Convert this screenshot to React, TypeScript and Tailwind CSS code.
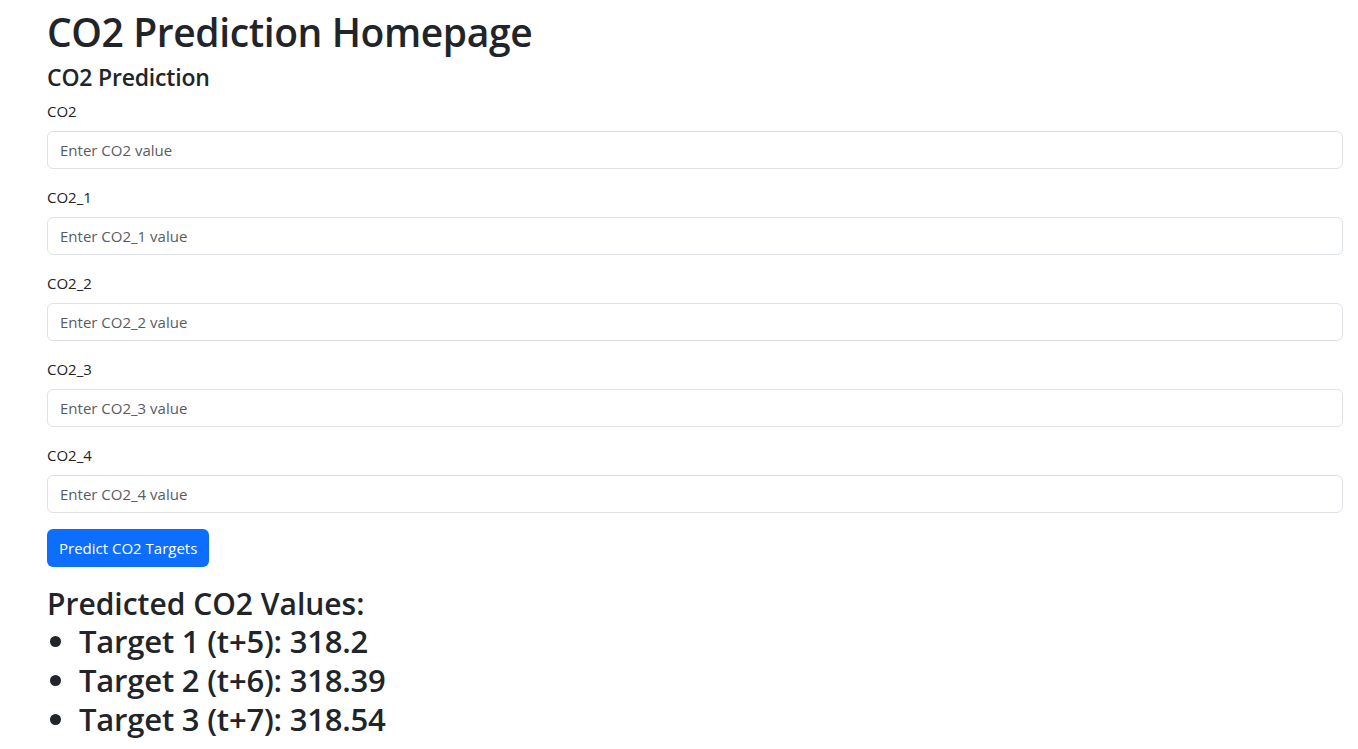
import React from "react";

const fields = ["CO2", "CO2_1", "CO2_2", "CO2_3", "CO2_4"];

export default function App() {
  return (
    <div
      className="min-h-screen bg-white text-[#212529] pl-[47px] pr-[15px] pt-[9px]"
      style={{ fontFamily: '"Open Sans", "Noto Sans", sans-serif' }}
    >
      <h1 className="text-[39px] leading-[1.2] font-semibold tracking-[-0.4px] mb-[8px]">CO2 Prediction Homepage</h1>
      <h4 className="text-[23px] leading-[1.2] font-semibold tracking-[-0.2px] mb-[8px]">CO2 Prediction</h4>
      <form onSubmit={(e) => e.preventDefault()}>
        {fields.map((f) => (
          <div key={f} className="mb-4">
            <label className="block text-[15px] leading-[24px] mb-2">{f}</label>
            <input
              type="text"
              placeholder={`Enter ${f} value`}
              className="block w-full h-[38px] px-3 text-[15px] border border-[#dee2e6] rounded-[6px] placeholder:text-[#595c5f] outline-none"
            />
          </div>
        ))}
        <button
          type="submit"
          className="h-[38px] px-3 bg-[#0d6efd] text-white text-[15px] rounded-[6px]"
        >
          Predict CO2 Targets
        </button>
      </form>
      <div className="mt-[19px]">
        <h2 className="text-[30px] leading-[36px] font-semibold">Predicted CO2 Values:</h2>
        <ul className="list-disc pl-[32px] text-[31px] leading-[39px] font-semibold tracking-[-0.2px]">
          <li>Target 1 (t+5): 318.2</li>
          <li>Target 2 (t+6): 318.39</li>
          <li>Target 3 (t+7): 318.54</li>
        </ul>
      </div>
    </div>
  );
}
